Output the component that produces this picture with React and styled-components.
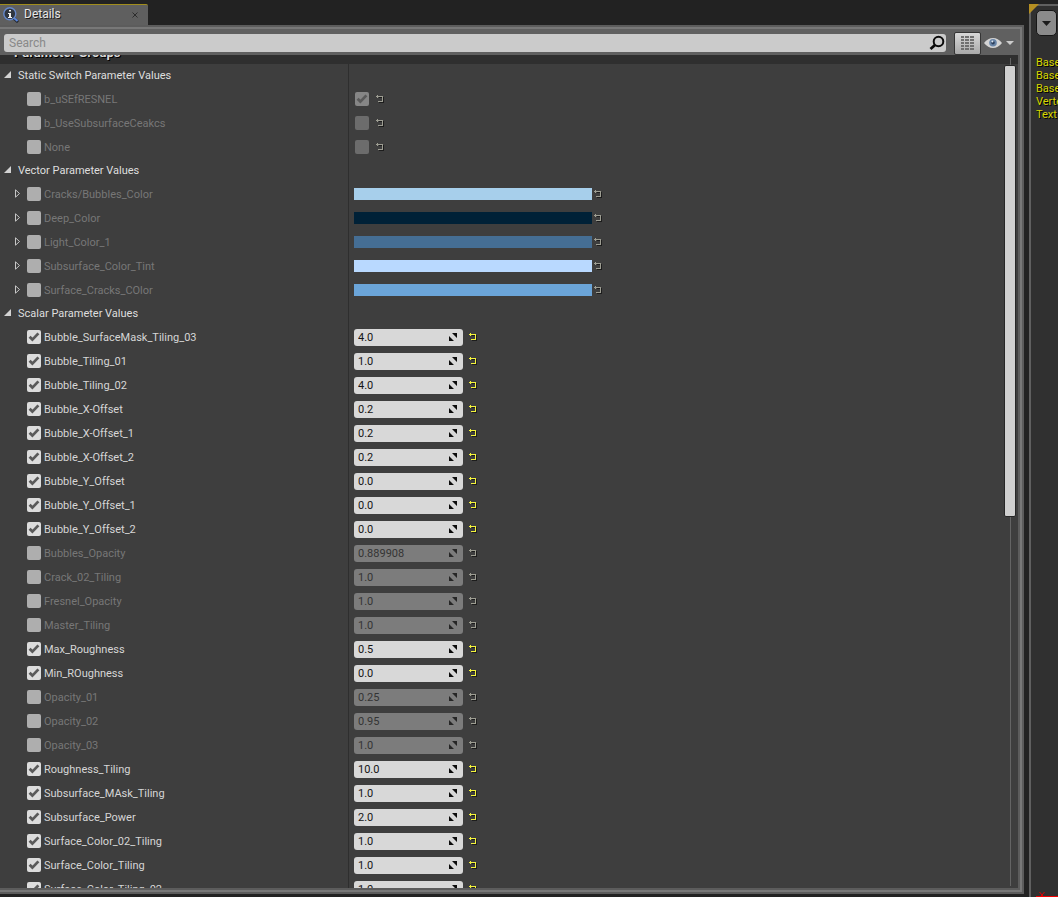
import React, { useState } from "react";
import styled, { createGlobalStyle, css } from "styled-components";

const GlobalStyle = createGlobalStyle`
  *, *::before, *::after { box-sizing: border-box; }
  body {
    margin: 0;
    background: #222222;
    font-family: Roboto, "Liberation Sans", sans-serif;
    font-size: 11px;
    line-height: 15px;
    color: #d8d8d8;
  }
  button, input { font: inherit; color: inherit; margin: 0; padding: 0; }
  button { border: 0; background: none; cursor: pointer; }
  svg { display: block; }
`;

const Screen = styled.div`
  display: flex;
  gap: 5px;
  height: 100vh;
  overflow: hidden;
`;

const Dock = styled.main`
  flex: 1;
  min-width: 0;
  display: flex;
  flex-direction: column;
  padding: 4px 0 3px;
`;

const Tab = styled.div`
  display: flex;
  align-items: center;
  gap: 5px;
  width: 148px;
  height: 21px;
  padding: 0 9px 0 3px;
  background: #5f5f5f;
  border-top: 1px solid #a18d1c;
  border-top-right-radius: 2px;
  flex: none;
`;

const TabTitle = styled.h1`
  flex: 1;
  margin: 0;
  font-size: 12px;
  line-height: 16px;
  padding-bottom: 2px;
  font-weight: 400;
  color: #e6e6e6;
  text-shadow: 1px 1px 0 #1c1c1c;
`;

const CloseButton = styled.button`
  width: 8px;
  height: 8px;
`;

const Frame = styled.section`
  flex: 1;
  min-height: 0;
  display: flex;
  border: 2px solid #5c5c5c;
  border-left: 0;
`;

const Panel = styled.div`
  flex: 1;
  min-width: 0;
  display: flex;
  flex-direction: column;
  border: 2px solid #787878;
  border-left: 0;
`;

const Toolbar = styled.div`
  display: flex;
  align-items: center;
  flex: none;
  height: 26px;
  padding: 2px 6px 0 4px;
  background: #606060;
`;

const SearchBox = styled.label`
  flex: 1;
  display: flex;
  align-items: center;
  height: 18px;
  padding: 0 1px 0 5px;
  border-radius: 3px;
  background: #cbcbcb;
`;

const SearchInput = styled.input.attrs({ type: "text" })`
  flex: 1;
  min-width: 0;
  border: 0;
  outline: 0;
  background: none;
  font-size: 12px;
  color: #222222;
  &::placeholder { color: #898989; opacity: 1; }
`;

const GridButton = styled.button`
  display: grid;
  place-items: center;
  width: 27px;
  height: 23px;
  margin-left: 8px;
  border: 1px solid #353535;
  border-radius: 2px;
  background: linear-gradient(#d8d8d8, #a9a9a9);
`;

const ViewButton = styled.button`
  display: flex;
  align-items: center;
  gap: 4px;
  margin-left: 3px;
`;

const List = styled.div`
  position: relative;
  flex: 1;
  min-height: 0;
  overflow: hidden;
  background: #3e3e3e;
  border: 2px solid #5c5c5c;
  border-width: 0 2px 2px 0;
`;

const ListTitle = styled.h2`
  height: 24px;
  margin: -15px 0 0;
  padding: 5px 14px;
  background: #2f2f2f;
  font-size: 13px;
  line-height: 15px;
  font-weight: 700;
  color: #d8d8d8;
  text-shadow: 1px 1px 0 #000000;
`;

const nameColumn = css`
  display: flex;
  align-items: center;
  width: 349px;
  flex: none;
  align-self: stretch;
  border-right: 1px solid #2e2e2e;
`;

const GroupRow = styled.div`
  display: flex;
  height: 23px;
`;

const GroupName = styled.h3`
  ${nameColumn}
  gap: 7px;
  margin: 0;
  padding-left: 4px;
  font-size: 11px;
  font-weight: 400;
  color: #dedede;
`;

const Row = styled.div`
  display: flex;
  align-items: center;
  height: 24px;
`;

const NameCell = styled.div`
  ${nameColumn}
  padding-left: 14px;
`;

const Expander = styled.span`
  width: 13px;
  flex: none;
`;

const ExpandButton = styled.button`
  display: block;
`;

const NameLabel = styled.label`
  display: flex;
  align-items: center;
  gap: 3px;
  white-space: nowrap;
  color: ${(p) => (p.$on ? "#d6d6d6" : "#777777")};
`;

const ValueCell = styled.div`
  display: flex;
  align-items: center;
  gap: ${(p) => p.$gap}px;
  padding-left: 5px;
`;

const SwitchValue = styled.span`
  padding-left: 1px;
`;

const CheckWrap = styled.span`
  display: block;
  position: relative;
  width: 14px;
  height: 14px;
  flex: none;
  svg { position: absolute; inset: 0; pointer-events: none; }
`;

const checkColors = { on: "#dcdcdc", off: "#aeaeae", dimOn: "#868686", dim: "#6c6c6c" };

const CheckInput = styled.input.attrs({ type: "checkbox" })`
  appearance: none;
  display: block;
  width: 14px;
  height: 14px;
  border-radius: 2px;
  background: ${(p) => checkColors[p.$tone]};
`;

const Swatch = styled.button`
  width: 238px;
  height: 12px;
  background: ${(p) => p.$color};
`;

const SpinBox = styled.div`
  display: flex;
  align-items: center;
  width: 109px;
  height: 17px;
  padding: 0 5px 0 4px;
  border-radius: 3px;
  background: ${(p) => (p.$on ? "#d8d8d8" : "#7c7c7c")};
  color: ${(p) => (p.$on ? "#141414" : "#343434")};
`;

const SpinInput = styled.input.attrs({ type: "text" })`
  flex: 1;
  min-width: 0;
  height: 17px;
  padding-top: 1px;
  border: 0;
  outline: 0;
  background: none;
`;

const ResetButton = styled.button`
  width: 9px;
  height: 9px;
`;

const ScrollRail = styled.div`
  position: absolute;
  top: 3px;
  right: 2px;
  bottom: 2px;
  width: 12px;
  padding-top: 7px;
  background: linear-gradient(#646464, #646464) 6px 0 / 1px 100% no-repeat;
`;

const ScrollThumb = styled.div`
  height: 55%;
  border: 1px solid #262626;
  border-radius: 2px;
  background: #cfcfcf;
`;

const Viewport = styled.aside`
  position: relative;
  flex: 0 0 29px;
  min-width: 0;
  margin-top: 4px;
  padding: 4px 0 0 5px;
  border: 2px solid #606060;
  border-width: 2px 0 0 2px;
  background: #303030;
`;

const Corner = styled.svg`
  position: absolute;
  top: -2px;
  left: -2px;
`;

const MenuButton = styled.button`
  position: relative;
  display: grid;
  place-items: center;
  width: 21px;
  height: 26px;
  border: 1px solid #161616;
  border-radius: 5px;
  background: #8b8b8b;
`;

const Stats = styled.ul`
  margin: 20px 0 0;
  padding: 0;
  list-style: none;
  line-height: 13px;
  white-space: nowrap;
  color: #d6d600;
  text-shadow: 1px 1px 0 #000000;
`;

const Axis = styled.svg`
  position: absolute;
  right: 0;
  bottom: 0;
`;

function Check({ tone, checked, ...rest }) {
  return (
    <CheckWrap>
      <CheckInput $tone={tone} checked={checked} {...rest} />
      {checked && (
        <svg width="14" height="14" viewBox="0 0 14 14" fill="none">
          <path d="M2.6 6.8 L5.4 9.6 L11.4 3.4" stroke="#5a5a5a" strokeWidth="2.8" />
        </svg>
      )}
    </CheckWrap>
  );
}

function Reset({ name, bright }) {
  const color = bright ? "#f4f43c" : "#9d9d92";
  return (
    <ResetButton aria-label={`Reset ${name}`}>
      <svg width="9" height="9" viewBox="0 0 9 9" fill="none" shapeRendering="crispEdges">
        <path d="M3 2.5 H7.5 V7.5 H3" stroke="#1c1c1c" />
        <path d="M0 1.5 H7 M6.5 1 V7 M7 6.5 H2 M1.5 0 V3" stroke={color} />
      </svg>
    </ResetButton>
  );
}

function GroupHeader({ children }) {
  return (
    <GroupRow>
      <GroupName>
        <svg width="7" height="9" viewBox="0 0 7 9">
          <path d="M7 0 V7 H0 Z" fill="#d2d2d2" />
        </svg>
        {children}
      </GroupName>
    </GroupRow>
  );
}

function Name({ name, on, onToggle, expandable }) {
  return (
    <NameCell>
      <Expander>
        {expandable && (
          <ExpandButton aria-label={`Expand ${name}`}>
            <svg width="7" height="10" viewBox="0 0 7 10" fill="none">
              <path d="M1.5 0.8 V8.2 L5.5 4.5 Z" stroke="#c6c6c6" />
            </svg>
          </ExpandButton>
        )}
      </Expander>
      <NameLabel $on={on}>
        <Check tone={on ? "on" : "off"} checked={on} onChange={onToggle} />
        {name}
      </NameLabel>
    </NameCell>
  );
}

function SwitchRow({ name, value }) {
  const [on, setOn] = useState(false);
  return (
    <Row>
      <Name name={name} on={on} onToggle={() => setOn(!on)} />
      <ValueCell $gap={7}>
        <SwitchValue>
          <Check tone={value ? "dimOn" : "dim"} checked={value} disabled aria-label={`${name} value`} />
        </SwitchValue>
        <Reset name={name} />
      </ValueCell>
    </Row>
  );
}

function ColorRow({ name, color }) {
  const [on, setOn] = useState(false);
  return (
    <Row>
      <Name name={name} on={on} onToggle={() => setOn(!on)} expandable />
      <ValueCell $gap={2}>
        <Swatch $color={color} aria-label={`${name} color`} />
        <Reset name={name} />
      </ValueCell>
    </Row>
  );
}

function ScalarRow({ name, value, enabled }) {
  const [on, setOn] = useState(enabled);
  return (
    <Row>
      <Name name={name} on={on} onToggle={() => setOn(!on)} />
      <ValueCell $gap={6}>
        <SpinBox $on={on}>
          <SpinInput defaultValue={value} aria-label={name} readOnly={!on} />
          <svg width="9" height="9" viewBox="0 0 9 9">
            <path d="M3 0 H8 V5 Z M0 3 L5 8 H0 Z" fill={on ? "#0c0c0c" : "#262626"} />
          </svg>
        </SpinBox>
        <Reset name={name} bright={on} />
      </ValueCell>
    </Row>
  );
}

const switches = [
  ["b_uSEfRESNEL", true],
  ["b_UseSubsurfaceCeakcs", false],
  ["None", false],
];

const colors = [
  ["Cracks/Bubbles_Color", "#a7cfeb"],
  ["Deep_Color", "#002137"],
  ["Light_Color_1", "#456e94"],
  ["Subsurface_Color_Tint", "#b9d9ff"],
  ["Surface_Cracks_COlor", "#6ba5d9"],
];

const scalars = [
  ["Bubble_SurfaceMask_Tiling_03", "4.0", true],
  ["Bubble_Tiling_01", "1.0", true],
  ["Bubble_Tiling_02", "4.0", true],
  ["Bubble_X-Offset", "0.2", true],
  ["Bubble_X-Offset_1", "0.2", true],
  ["Bubble_X-Offset_2", "0.2", true],
  ["Bubble_Y_Offset", "0.0", true],
  ["Bubble_Y_Offset_1", "0.0", true],
  ["Bubble_Y_Offset_2", "0.0", true],
  ["Bubbles_Opacity", "0.889908", false],
  ["Crack_02_Tiling", "1.0", false],
  ["Fresnel_Opacity", "1.0", false],
  ["Master_Tiling", "1.0", false],
  ["Max_Roughness", "0.5", true],
  ["Min_ROughness", "0.0", true],
  ["Opacity_01", "0.25", false],
  ["Opacity_02", "0.95", false],
  ["Opacity_03", "1.0", false],
  ["Roughness_Tiling", "10.0", true],
  ["Subsurface_MAsk_Tiling", "1.0", true],
  ["Subsurface_Power", "2.0", true],
  ["Surface_Color_02_Tiling", "1.0", true],
  ["Surface_Color_Tiling", "1.0", true],
  ["Surface_Color_Tiling_02", "1.0", true],
];

export default function App() {
  return (
    <>
      <GlobalStyle />
      <Screen>
        <Dock>
          <Tab>
            <svg width="16" height="16" viewBox="0 0 16 16" fill="none">
              <path d="M10.5 11 L15 15" stroke="#20252e" strokeWidth="3" />
              <path d="M10.5 10.5 L14.5 14" stroke="#5a86dc" strokeWidth="2" />
              <circle cx="6.8" cy="6.8" r="6" fill="#303640" stroke="#6689cc" strokeWidth="1.4" />
              <path d="M6 3 H8 V4.6 H6 Z M5 6 H8 V10 H9 V11 H5 V10 H6 V7 H5 Z" fill="#f2f2f2" />
            </svg>
            <TabTitle>Details</TabTitle>
            <CloseButton aria-label="Close tab">
              <svg width="8" height="8" viewBox="0 0 8 8">
                <path d="M1.5 1.5 L6.5 6.5 M6.5 1.5 L1.5 6.5" stroke="#2c2c2c" />
              </svg>
            </CloseButton>
          </Tab>
          <Frame>
            <Panel>
              <Toolbar>
                <SearchBox>
                  <SearchInput placeholder="Search" aria-label="Search" />
                  <svg width="16" height="16" viewBox="0 0 16 16" fill="none">
                    <circle cx="9.5" cy="6.5" r="4.8" stroke="#0a0a0a" strokeWidth="2" />
                    <path d="M6 10 L1.5 14" stroke="#0a0a0a" strokeWidth="2.8" />
                  </svg>
                </SearchBox>
                <GridButton aria-label="Property matrix">
                  <svg width="14" height="15" viewBox="0 0 14 15" shapeRendering="crispEdges">
                    {[0, 3, 6, 9, 12].map((y) => (
                      <path key={y} d={`M0 ${y} h3 v2 h-3 Z M4 ${y} h4 v2 h-4 Z M9 ${y} h4 v2 h-4 Z`} fill="#707070" />
                    ))}
                  </svg>
                </GridButton>
                <ViewButton aria-label="View options">
                  <svg width="18" height="12" viewBox="0 0 18 12">
                    <path d="M0 6 Q4 1 9 1 Q14 1 18 6 Q14 11 9 11 Q4 11 0 6 Z" fill="#d4d4d4" />
                    <circle cx="9" cy="5.8" r="3.8" fill="#6885a8" />
                    <circle cx="9" cy="5.8" r="1.8" fill="#2b3f5c" />
                    <circle cx="8.4" cy="4.4" r="1" fill="#dfe8f2" />
                  </svg>
                  <svg width="8" height="4" viewBox="0 0 8 4">
                    <path d="M0 0 H8 L4 4 Z" fill="#cccccc" />
                  </svg>
                </ViewButton>
              </Toolbar>
              <List>
                <ListTitle>Parameter Groups</ListTitle>
                <GroupHeader>Static Switch Parameter Values</GroupHeader>
                {switches.map(([name, value]) => (
                  <SwitchRow key={name} name={name} value={value} />
                ))}
                <GroupHeader>Vector Parameter Values</GroupHeader>
                {colors.map(([name, color]) => (
                  <ColorRow key={name} name={name} color={color} />
                ))}
                <GroupHeader>Scalar Parameter Values</GroupHeader>
                {scalars.map(([name, value, enabled]) => (
                  <ScalarRow key={name} name={name} value={value} enabled={enabled} />
                ))}
                <ScrollRail>
                  <ScrollThumb />
                </ScrollRail>
              </List>
            </Panel>
          </Frame>
        </Dock>
        <Viewport>
          <Corner width="10" height="10" viewBox="0 0 10 10">
            <path d="M0 0 H10 L0 10 Z" fill="#b58f22" />
          </Corner>
          <MenuButton aria-label="Viewport options">
            <svg width="9" height="5" viewBox="0 0 9 5">
              <path d="M0 0 H9 L4.5 5 Z" fill="#1c1c1c" />
            </svg>
          </MenuButton>
          <Stats>
            <li>Base</li>
            <li>Base</li>
            <li>Base</li>
            <li>Verte</li>
            <li>Text</li>
          </Stats>
          <Axis width="22" height="5" viewBox="0 0 22 5">
            <path d="M3.5 0 L6 3 L8.5 0 M4.5 5 L6 3 L7.5 5" fill="none" stroke="#e00000" />
            <path d="M0 4 H22 V5 H0 Z" fill="#f00000" />
          </Axis>
        </Viewport>
      </Screen>
    </>
  );
}
